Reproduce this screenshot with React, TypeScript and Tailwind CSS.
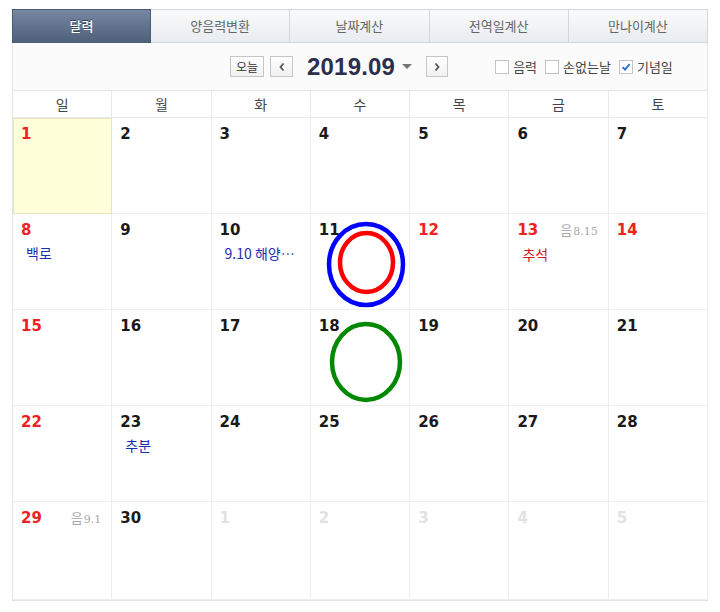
import React from "react";

type Cell = {
  d: number;
  color: "red" | "black" | "gray";
  lunar?: string;
  events?: { text: string; color: string }[];
  today?: boolean;
};

const cells: Cell[] = [
  { d: 1, color: "red", today: true },
  { d: 2, color: "black" },
  { d: 3, color: "black" },
  { d: 4, color: "black" },
  { d: 5, color: "black" },
  { d: 6, color: "black" },
  { d: 7, color: "black" },
  { d: 8, color: "red", events: [{ text: "백로", color: "text-[#1a2fb0]" }] },
  { d: 9, color: "black" },
  { d: 10, color: "black", events: [{ text: "9.10 해양…", color: "text-[#1a2fb0]" }] },
  { d: 11, color: "black" },
  { d: 12, color: "red" },
  { d: 13, color: "red", lunar: "8.15", events: [{ text: "추석", color: "text-[#d01818]" }] },
  { d: 14, color: "red" },
  { d: 15, color: "red" },
  { d: 16, color: "black" },
  { d: 17, color: "black" },
  { d: 18, color: "black" },
  { d: 19, color: "black" },
  { d: 20, color: "black" },
  { d: 21, color: "black" },
  { d: 22, color: "red" },
  { d: 23, color: "black", events: [{ text: "추분", color: "text-[#1a2fb0]" }] },
  { d: 24, color: "black" },
  { d: 25, color: "black" },
  { d: 26, color: "black" },
  { d: 27, color: "black" },
  { d: 28, color: "black" },
  { d: 29, color: "red", lunar: "9.1" },
  { d: 30, color: "black" },
  { d: 1, color: "gray" },
  { d: 2, color: "gray" },
  { d: 3, color: "gray" },
  { d: 4, color: "gray" },
  { d: 5, color: "gray" },
];

const tabs = ["달력", "양음력변환", "날짜계산", "전역일계산", "만나이계산"];
const weekdays = ["일", "월", "화", "수", "목", "금", "토"];

const kr = "font-['Noto_Sans_CJK_KR','Noto_Sans',sans-serif]";
const num = "font-['DejaVu_Sans','Noto_Sans',sans-serif]";

function Checkbox({ checked, label }: { checked?: boolean; label: string }) {
  return (
    <div className="flex items-center">
      <span className="w-[14px] h-[14px] border border-[#c4c4c4] bg-white flex items-center justify-center">
        {checked && (
          <svg width="10" height="10" viewBox="0 0 10 10">
            <path d="M1.5 5.2 L4 7.6 L8.6 2.2" fill="none" stroke="#2a6fd6" strokeWidth="1.8" />
          </svg>
        )}
      </span>
      <span className={`${kr} text-[13px] text-[#444] ml-[4px] leading-none`}>{label}</span>
    </div>
  );
}

export default function App() {
  return (
    <div className="bg-white w-[720px] h-[612px] pt-[9px] pl-[12px]">
      <div className="w-[696px]">
        {/* Tabs */}
        <div className="flex h-[34px]">
          {tabs.map((t, i) =>
            i === 0 ? (
              <div
                key={t}
                className={`${kr} w-[139px] flex items-center justify-center text-[13px] font-medium text-white bg-gradient-to-b from-[#7688a2] to-[#4f6079] border border-[#4a5a70] [text-shadow:0_-1px_0_#3a4658]`}
              >
                {t}
              </div>
            ) : (
              <div
                key={t}
                className={`${kr} flex-1 flex items-center justify-center text-[13px] text-[#666] bg-gradient-to-b from-[#f9fafb] to-[#e9ecf0] border-t border-b border-r border-[#d3d7dc]`}
              >
                {t}
              </div>
            )
          )}
        </div>

        {/* Toolbar */}
        <div className="h-[47px] bg-[#fbfbfb] border-x border-[#e4e4e4] flex items-center">
          <div className="ml-[217px] w-[34px] h-[21px] border border-[#c6c6c6] bg-gradient-to-b from-white to-[#f1f1f1] flex items-center justify-center">
            <span className={`${kr} text-[12px] text-[#333] leading-none`}>오늘</span>
          </div>
          <div className="ml-[6px] w-[23px] h-[21px] border border-[#c6c6c6] bg-gradient-to-b from-white to-[#f1f1f1] flex items-center justify-center">
            <svg width="8" height="10" viewBox="0 0 8 10">
              <path d="M5.5 1.5 L2.5 5 L5.5 8.5" fill="none" stroke="#555" strokeWidth="1.8" />
            </svg>
          </div>
          <div className="ml-[14px] font-['Liberation_Sans','Noto_Sans',sans-serif] font-bold text-[24px] text-[#2b2f4c] leading-none tracking-[0.2px]">
            2019.09
          </div>
          <svg className="ml-[7px]" width="10" height="6" viewBox="0 0 10 6">
            <path d="M0 0 L10 0 L5 5 Z" fill="#777" />
          </svg>
          <div className="ml-[14px] w-[22px] h-[21px] border border-[#c6c6c6] bg-gradient-to-b from-white to-[#f1f1f1] flex items-center justify-center">
            <svg width="8" height="10" viewBox="0 0 8 10">
              <path d="M2.5 1.5 L5.5 5 L2.5 8.5" fill="none" stroke="#555" strokeWidth="1.8" />
            </svg>
          </div>
          <div className="ml-[47px] flex items-center gap-[8px]">
            <Checkbox label="음력" />
            <Checkbox label="손없는날" />
            <Checkbox checked label="기념일" />
          </div>
        </div>

        {/* Weekday header */}
        <div className="grid grid-cols-7 h-[28px] border-t border-[#e4e4e4] border-l border-[#e4e4e4]">
          {weekdays.map((w) => (
            <div
              key={w}
              className={`${kr} flex items-center justify-center text-[14px] text-[#444] border-r border-b border-[#e8eaed]`}
            >
              {w}
            </div>
          ))}
        </div>

        {/* Days */}
        <div className="relative grid grid-cols-7 grid-rows-[repeat(4,96px)_98px] border-l border-b border-[#e2e4e7]">
          {cells.map((c, i) => (
            <div
              key={i}
              className={`relative px-[8px] pt-[6px] border-r border-b border-[#eceef1] ${
                c.today ? "bg-[#ffffd9] outline outline-1 outline-[#e6e6c4] -outline-offset-1" : "bg-white"
              }`}
            >
              <div className="flex items-baseline justify-between">
                <span
                  className={`${num} font-bold text-[15px] leading-[20px] ${
                    c.color === "red" ? "text-[#ee2222]" : c.color === "gray" ? "text-[#e2e2e2]" : "text-[#1a1a1a]"
                  }`}
                >
                  {c.d}
                </span>
                {c.lunar && (
                  <span className="flex items-baseline text-[#a8a8a8] mr-[2px]">
                    <span className={`${kr} text-[13px]`}>음</span>
                    <span className="font-['DejaVu_Serif','Liberation_Serif',serif] text-[11px] ml-[1px]">{c.lunar}</span>
                  </span>
                )}
              </div>
              {c.events?.map((e) => (
                <div key={e.text} className={`${kr} ${e.color} text-[14px] leading-[18px] mt-[4px] pl-[5px] whitespace-nowrap`}>
                  {e.text}
                </div>
              ))}
            </div>
          ))}

          {/* Hand-drawn circles overlay */}
          <svg className="absolute left-0 top-0 pointer-events-none" width="696" height="482" viewBox="0 0 696 482">
            <ellipse cx="353" cy="146.5" rx="37" ry="40.5" fill="none" stroke="#0000ff" strokeWidth="4.5" />
            <ellipse cx="353.5" cy="144.5" rx="26.5" ry="29.5" fill="none" stroke="#ff0000" strokeWidth="4.5" />
            <ellipse cx="353" cy="244" rx="34" ry="38" fill="none" stroke="#008800" strokeWidth="4.5" />
          </svg>
        </div>
      </div>
    </div>
  );
}
